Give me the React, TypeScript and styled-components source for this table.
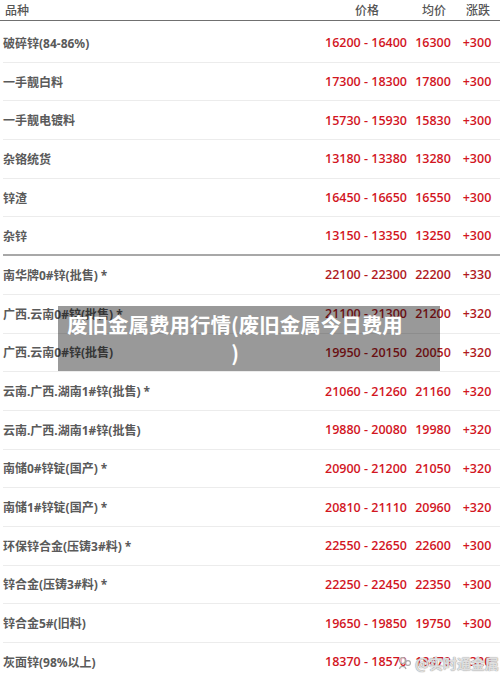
import styled, { createGlobalStyle } from 'styled-components';

type PriceRow = {
  name: string;
  range: string;
  avg: string;
  change: string;
  dark?: boolean;
};

const scrapRows: PriceRow[] = [
  { name: '破碎锌(84-86%)', range: '16200 - 16400', avg: '16300', change: '+300' },
  { name: '一手靓白料', range: '17300 - 18300', avg: '17800', change: '+300' },
  { name: '一手靓电镀料', range: '15730 - 15930', avg: '15830', change: '+300' },
  { name: '杂铬统货', range: '13180 - 13380', avg: '13280', change: '+300' },
  { name: '锌渣', range: '16450 - 16650', avg: '16550', change: '+300' },
  { name: '杂锌', range: '13150 - 13350', avg: '13250', change: '+300' },
];

const ingotRows: PriceRow[] = [
  { name: '南华牌0#锌(批售) *', range: '22100 - 22300', avg: '22200', change: '+330', dark: true },
  { name: '广西.云南0#锌(批售) *', range: '21100 - 21300', avg: '21200', change: '+320', dark: true },
  { name: '广西.云南0#锌(批售)', range: '19950 - 20150', avg: '20050', change: '+320', dark: true },
  { name: '云南.广西.湖南1#锌(批售) *', range: '21060 - 21260', avg: '21160', change: '+320' },
  { name: '云南.广西.湖南1#锌(批售)', range: '19880 - 20080', avg: '19980', change: '+320' },
  { name: '南储0#锌锭(国产) *', range: '20900 - 21200', avg: '21050', change: '+320' },
  { name: '南储1#锌锭(国产) *', range: '20810 - 21110', avg: '20960', change: '+320' },
  { name: '环保锌合金(压铸3#料) *', range: '22550 - 22650', avg: '22600', change: '+300' },
  { name: '锌合金(压铸3#料) *', range: '22250 - 22450', avg: '22350', change: '+300' },
  { name: '锌合金5#(旧料)', range: '19650 - 19850', avg: '19750', change: '+300' },
  { name: '灰面锌(98%以上)', range: '18370 - 18570', avg: '18470', change: '+320' },
];

function App() {
  return (
    <>
      <GlobalStyle />
      <Page>
        <HeaderRow>
          <HeadCell>品种</HeadCell>
          <HeadCell $center>价格</HeadCell>
          <HeadCell $center>均价</HeadCell>
          <HeadCell $center>涨跌</HeadCell>
        </HeaderRow>
        <Body>
          {scrapRows.map((row, i) => (
            <Row key={row.name} $section={i === scrapRows.length - 1}>
              <NameCell>{row.name}</NameCell>
              <NumCell $dark={row.dark}>{row.range}</NumCell>
              <NumCell $dark={row.dark}>{row.avg}</NumCell>
              <NumCell $dark={row.dark}>{row.change}</NumCell>
            </Row>
          ))}
          {ingotRows.map((row) => (
            <Row key={row.name + row.range}>
              <NameCell>{row.name}</NameCell>
              <NumCell $dark={row.dark}>{row.range}</NumCell>
              <NumCell $dark={row.dark}>{row.avg}</NumCell>
              <NumCell $dark={row.dark}>{row.change}</NumCell>
            </Row>
          ))}
        </Body>

        <TitleBanner>
          废旧金属费用行情(废旧金属今日费用
          <br />)
        </TitleBanner>

        <Watermark>
          <svg width="14" height="14" viewBox="0 0 14 14" fill="none">
            <circle cx="4.5" cy="4.5" r="3" stroke="#aaa" strokeWidth="1.2" fill="rgba(255,255,255,0.6)" />
            <path d="M1.5 13 C2 9.5 7 9.5 8 13" stroke="#aaa" strokeWidth="1.2" fill="none" />
            <circle cx="10" cy="7" r="2.4" stroke="#aaa" strokeWidth="1.1" fill="rgba(255,255,255,0.6)" />
          </svg>
          <span>@实时通金属</span>
        </Watermark>
      </Page>
    </>
  );
}

const GlobalStyle = createGlobalStyle`
  html, body {
    margin: 0;
    padding: 0;
    background: #fff;
  }
  body {
    font-family: "Noto Sans", "Noto Sans CJK SC", sans-serif;
  }
`;

const Page = styled.div`
  position: relative;
  width: 500px;
  height: 677px;
  overflow: hidden;
  background: #fff;
`;

const columns = `1fr 90px 44px 44px`;

const HeaderRow = styled.div`
  display: grid;
  grid-template-columns: ${columns};
  align-items: center;
  height: 20px;
  padding-left: 5px;
  border-bottom: 1.5px solid #707070;
  margin-bottom: 3px;
`;

const HeadCell = styled.div<{ $center?: boolean }>`
  font-family: "Noto Sans CJK SC", sans-serif;
  font-size: 12px;
  font-weight: 500;
  color: #555;
  text-align: ${(p) => (p.$center ? 'center' : 'left')};
  line-height: 1;
`;

const Body = styled.div`
  padding-left: 3px;
`;

const Row = styled.div<{ $section?: boolean }>`
  display: grid;
  grid-template-columns: ${columns};
  align-items: center;
  box-sizing: border-box;
  height: 38.7px;
  border-bottom: ${(p) => (p.$section ? '2px solid #a8a8a8' : '1px solid #ececec')};
`;

const NameCell = styled.div`
  font-family: "Noto Sans", "Noto Sans CJK SC", sans-serif;
  font-size: 12px;
  font-weight: 700;
  color: #5a5a5a;
  white-space: nowrap;
`;

const NumCell = styled.div<{ $dark?: boolean }>`
  margin-left: -2px;
  font-family: "Open Sans", "Noto Sans", sans-serif;
  font-size: 12.5px;
  font-weight: 600;
  color: ${(p) => (p.$dark ? '#b01a1e' : '#d2161f')};
  text-align: center;
  white-space: nowrap;
`;

const TitleBanner = styled.div`
  position: absolute;
  left: 58px;
  top: 306px;
  width: 382px;
  height: 65px;
  box-sizing: border-box;
  padding: 4px 28px 0 0;
  background: rgba(0, 0, 0, 0.4);
  color: #fff;
  font-family: "Noto Sans CJK SC", sans-serif;
  font-size: 20.5px;
  font-weight: 700;
  line-height: 28px;
  text-align: center;
  white-space: nowrap;
`;

const Watermark = styled.div`
  position: absolute;
  left: 398px;
  top: 653px;
  display: flex;
  align-items: center;
  gap: 3px;
  font-family: "Noto Sans CJK SC", sans-serif;
  font-size: 14px;
  font-weight: 700;
  color: rgba(255, 255, 255, 0.7);
  text-shadow: 0 0 1px #999, 0 0 1px #999;
`;

export default App;
